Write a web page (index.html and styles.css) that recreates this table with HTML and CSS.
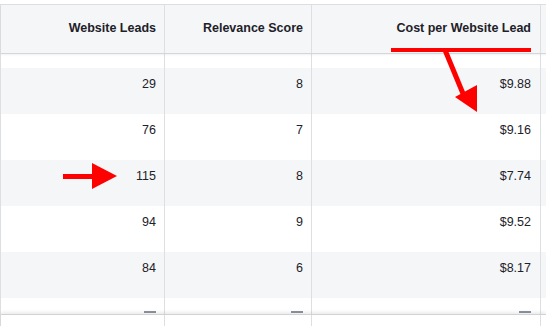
FILE: index.html
```html
<!DOCTYPE html>
<html>
<head>
<meta charset="utf-8">
<link rel="stylesheet" href="styles.css">
</head>
<body>
<div class="page">
  <div class="table">
    <div class="row head">
      <div class="cell">Website Leads</div>
      <div class="cell">Relevance Score</div>
      <div class="cell">Cost per Website Lead</div>
      <div class="cell"></div>
    </div>
    <div class="body">
      <div class="row top-part">
        <div class="cell"></div><div class="cell"></div><div class="cell"></div><div class="cell"></div>
      </div>
      <div class="row alt">
        <div class="cell">29</div><div class="cell">8</div><div class="cell">$9.88</div><div class="cell"></div>
      </div>
      <div class="row">
        <div class="cell">76</div><div class="cell">7</div><div class="cell">$9.16</div><div class="cell"></div>
      </div>
      <div class="row alt">
        <div class="cell">115</div><div class="cell">8</div><div class="cell">$7.74</div><div class="cell"></div>
      </div>
      <div class="row">
        <div class="cell">94</div><div class="cell">9</div><div class="cell">$9.52</div><div class="cell"></div>
      </div>
      <div class="row alt">
        <div class="cell">84</div><div class="cell">6</div><div class="cell">$8.17</div><div class="cell"></div>
      </div>
      <div class="row bottom-part">
        <div class="cell"><span class="dash"></span></div>
        <div class="cell"><span class="dash"></span></div>
        <div class="cell"><span class="dash"></span></div>
        <div class="cell"></div>
      </div>
    </div>
    <div class="row foot">
      <div class="cell"></div><div class="cell"></div><div class="cell"></div><div class="cell"></div>
    </div>
  </div>
  <svg class="marks" width="546" height="326" viewBox="0 0 546 326">
    <rect x="391" y="48" width="140" height="4" fill="#ff0000"/>
    <line x1="445" y1="50" x2="464" y2="96" stroke="#ff0000" stroke-width="5"/>
    <polygon points="455,97 477,85 477,112" fill="#ff0000"/>
    <rect x="63" y="174" width="31" height="5" fill="#ff0000"/>
    <polygon points="92,163 92,189 117,176" fill="#ff0000"/>
  </svg>
</div>
</body>
</html>
```

FILE: styles.css
```css
html, body {
  margin: 0;
  padding: 0;
  background: #ffffff;
}

.page {
  position: relative;
  width: 546px;
  height: 326px;
  overflow: hidden;
  padding-top: 4px;
  box-sizing: border-box;
  font-family: "Liberation Sans", Arial, Helvetica, sans-serif;
  color: #1d2129;
}

.table {
  border-top: 1px solid #dddfe2;
  border-left: 1px solid #dddfe2;
}

.row {
  display: grid;
  grid-template-columns: 164px 147px 229px 1fr;
  height: 46px;
  background: #ffffff;
}

.row.alt {
  background: #f5f6f7;
}

.cell {
  border-right: 1px solid #dddfe2;
  box-sizing: border-box;
  text-align: right;
  padding: 7px 8px 0 0;
  font-size: 12.5px;
  line-height: 18px;
  overflow: hidden;
}

.row .cell:nth-child(3) {
  padding-right: 9px;
}

.row.head {
  height: 48px;
  background: #f5f6f7;
  border-bottom: 1px solid #d3d6db;
  box-shadow: 0 1px 2px rgba(0, 0, 0, 0.06);
  position: relative;
  z-index: 1;
}

.row.head .cell {
  font-weight: bold;
  display: flex;
  align-items: center;
  justify-content: flex-end;
  padding-top: 0;
  padding-bottom: 2px;
}

.body {
  height: 260px;
  overflow: hidden;
}

.row.top-part {
  height: 14px;
}

.row.bottom-part {
  height: 16px;
  position: relative;
}

.row.bottom-part .cell {
  display: flex;
  justify-content: flex-end;
  align-items: flex-end;
  padding-top: 0;
  padding-bottom: 0;
}

.dash {
  display: block;
  width: 12px;
  height: 2px;
  background: #8d949e;
  margin-bottom: 1px;
}

.row.foot {
  height: 13px;
  border-top: 1px solid #cfd2d7;
  box-shadow: 0 -2px 3px rgba(0, 0, 0, 0.08);
  position: relative;
}

.marks {
  position: absolute;
  left: 0;
  top: 0;
  z-index: 5;
  pointer-events: none;
}
```
